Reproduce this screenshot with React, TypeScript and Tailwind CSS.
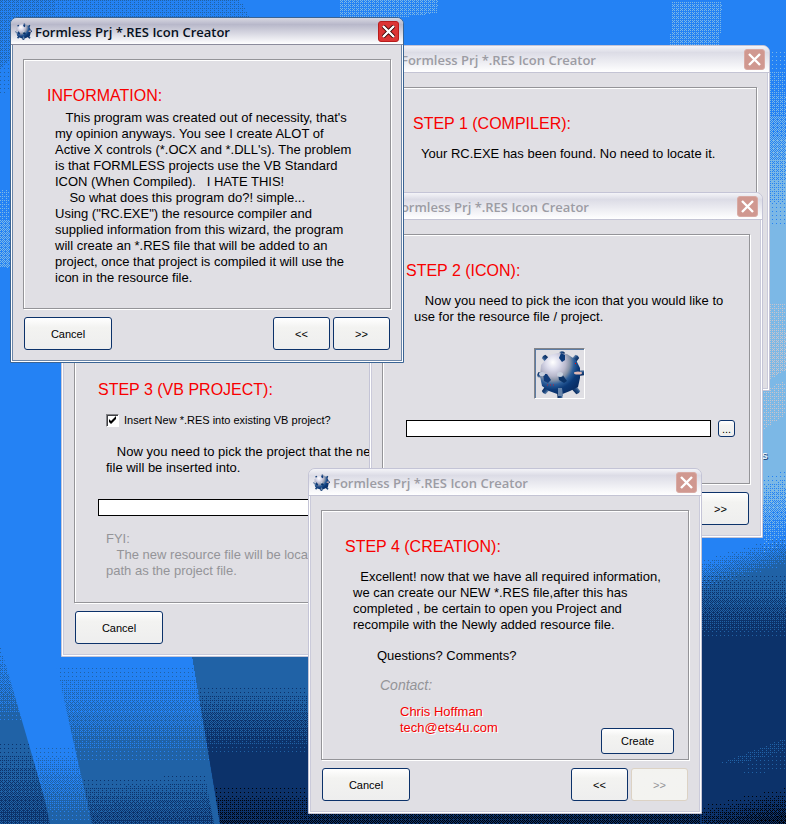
import React from "react";

const BAYER = [0, 8, 2, 10, 12, 4, 14, 6, 3, 11, 1, 9, 15, 7, 13, 5];
const LEVELS = [1, 3, 5, 7, 9, 11, 13, 15];

const INK = {
  bright: "#2482f4",
  mid: "#2062a6",
  navy: "#0c326a",
  light: "#7cb8e6",
  black: "#000208",
  sand: "#c8c4cc",
};

type Ink = keyof typeof INK;

function DitherPatterns() {
  return (
    <>
      {(Object.keys(INK) as Ink[]).map((ink) =>
        LEVELS.map((level) => (
          <pattern
            key={ink + level}
            id={`${ink}-${level}`}
            width="4"
            height="4"
            patternUnits="userSpaceOnUse"
          >
            {BAYER.map((t, i) =>
              t < level ? (
                <rect
                  key={i}
                  x={i % 4}
                  y={Math.floor(i / 4)}
                  width="1"
                  height="1"
                  fill={INK[ink]}
                />
              ) : null,
            )}
          </pattern>
        )),
      )}
    </>
  );
}

type FadeProps = {
  id: string;
  points: string;
  ink: Ink;
  y0: number;
  y1: number;
  rise?: number;
};

/* Fills a polygon with an ink that grows denser from y0 to y1; rise tilts the bands. */
function Fade({ id, points, ink, y0, y1, rise = 0 }: FadeProps) {
  const step = (y1 - y0) / LEVELS.length;
  return (
    <g clipPath={`url(#${id})`} shapeRendering="crispEdges">
      <clipPath id={id}>
        <polygon points={points} />
      </clipPath>
      {LEVELS.map((level, i) => {
        const y = y0 + step * i;
        return (
          <polygon
            key={level}
            points={`0,${y} 786,${y - rise} 786,${y - rise + step} 0,${y + step}`}
            fill={`url(#${ink}-${level})`}
          />
        );
      })}
      <polygon points={`0,${y1} 786,${y1 - rise} 786,1200 0,1200`} fill={INK[ink]} />
    </g>
  );
}

function Wallpaper() {
  return (
    <svg
      className="absolute inset-0 h-full w-full"
      viewBox="0 0 786 824"
      preserveAspectRatio="none"
      shapeRendering="crispEdges"
      aria-hidden="true"
    >
      <defs>
        <DitherPatterns />
      </defs>
      <rect width="786" height="824" fill={INK.bright} />
      <polygon points="0,0 55,0 54,17 12,18 10,60 0,70" fill="url(#mid-5)" />
      <polygon points="55,0 240,0 250,17 54,17" fill="url(#mid-3)" />
      <polygon points="0,70 10,60 10,90 0,96" fill="url(#mid-1)" />
      <polygon points="339,0 438,0 437,13 405,17 339,17" fill="url(#light-5)" />
      <polygon points="672,2 722,2 720,45 670,45" fill="url(#light-5)" />
      <polygon points="0,190 10,190 10,220 0,220" fill="url(#light-3)" />
      <polygon points="0,220 10,220 10,268 0,267" fill="url(#light-7)" />

      <Fade id="right-sky" points="763,50 786,50 786,824 763,824" ink="light" y0={50} y1={225} />
      <polygon points="769,304 786,304 786,330 769,330" fill="url(#sand-3)" />
      <polygon points="769,330 786,330 786,370 769,380" fill="url(#sand-5)" />
      <polygon points="763,390 786,380 786,415 763,430" fill="url(#sand-3)" />

      <Fade id="left-mid" points="0,645 52,824 0,824" ink="mid" y0={645} y1={722} />
      <Fade id="left-navy" points="0,645 52,824 0,824" ink="navy" y0={742} y1={850} />
      <Fade id="streak" points="0,600 57,664 92,824 50,824" ink="mid" y0={748} y1={820} />
      <Fade id="slab-mid" points="56,664 192,657 220,824 92,824" ink="mid" y0={667} y1={760} />
      <Fade id="slab-navy" points="80,770 202,760 214,824 92,824" ink="navy" y0={784} y1={850} rise={36} />
      <polygon points="191,650 320,650 320,824 220,824" fill={INK.mid} />
      <Fade id="centre-navy" points="191,650 320,650 320,824 220,824" ink="navy" y0={688} y1={752} />
      <Fade id="centre-black" points="191,650 320,650 320,824 220,824" ink="black" y0={786} y1={880} />
      <rect x="308" y="810" width="394" height="14" fill={INK.navy} />
      <rect x="308" y="813" width="394" height="11" fill="url(#black-7)" />

      <Fade id="hill-bright" points="700,400 786,400 786,824 700,824" ink="bright" y0={720} y1={795} rise={250} />
      <Fade id="hill-mid" points="700,400 786,400 786,824 700,824" ink="mid" y0={770} y1={800} rise={235} />
      <Fade id="hill-navy" points="700,400 786,400 786,824 700,824" ink="navy" y0={574} y1={638} />
      <polygon points="718,764 786,738 786,750 740,764" fill="url(#mid-3)" />
      <polygon points="748,762 786,750 786,770 742,776" fill="url(#mid-1)" />
      <Fade id="hill-black" points="702,700 786,700 786,824 702,824" ink="black" y0={948} y1={1000} rise={160} />
    </svg>
  );
}

function Mine({ size }: { size: string }) {
  const studs = [
    [9, 8, -45], [26, 4, 5], [40, 8, 40], [46, 23, 85], [4, 25, -85],
    [9, 41, -140], [24, 46, 180], [41, 41, 140],
  ];
  return (
    <svg className={`shrink-0 ${size}`} viewBox="0 0 48 48" aria-hidden="true">
      <defs>
        <radialGradient id="mine-ball" cx="0.32" cy="0.22" r="0.86">
          <stop offset="0" stopColor="#ffffff" />
          <stop offset="0.2" stopColor="#dcdcec" />
          <stop offset="0.38" stopColor="#b8b8cc" />
          <stop offset="0.5" stopColor="#8894a8" />
          <stop offset="0.62" stopColor="#2c5e9a" />
          <stop offset="0.76" stopColor="#0c3a78" />
          <stop offset="1" stopColor="#082a60" />
        </radialGradient>
        <linearGradient id="mine-stud" x1="0" x2="1">
          <stop offset="0" stopColor="#7c94b4" />
          <stop offset="0.4" stopColor="#204c84" />
          <stop offset="1" stopColor="#08285a" />
        </linearGradient>
      </defs>
      {studs.map(([x, y, turn]) => (
        <path
          key={`${x}-${y}`}
          transform={`translate(${x} ${y}) rotate(${turn})`}
          d="M-2.500-2Q0-3.500 2.500-2L3 7H-3Z"
          fill="url(#mine-stud)"
        />
      ))}
      <path
        d="M14 5L22 3L31 4L40 10L44 18L44 28L42 37L34 41L24 45L13 41L6 36L4 26L5 15Z"
        fill="url(#mine-ball)"
      />
      <path d="M25 3L29 5L29 10L26 12L23 8Z" fill="#0c3a78" />
      <path d="M7 24L11 24L15 30L12 33L8 31Z" fill="#103c7a" />
      <ellipse cx="6" cy="24" rx="3" ry="2" fill="#c4ccdc" />
      <path d="M22 24L26 24L31 31L28 33L23 30Z" fill="#0c3468" />
      <ellipse cx="24" cy="24.500" rx="3" ry="2.500" fill="#c8d0de" />
      <ellipse cx="42" cy="23" rx="4" ry="1.500" fill="#e0b8b4" />
      <path d="M22 38H26L27 46H22Z" fill="#6886ac" />
      <rect x="39" y="13" width="1" height="1" fill="#f00" />
      <path d="M11 35H20" stroke="#c02030" strokeDasharray="1 2" />
    </svg>
  );
}

type ButtonProps = {
  children: React.ReactNode;
  className: string;
  disabled?: boolean;
  label?: string;
};

function XpButton({ children, className, disabled, label }: ButtonProps) {
  return (
    <button
      type="button"
      disabled={disabled}
      aria-label={label}
      className={`flex items-center justify-center rounded-[3px] border border-[#0c326a] bg-linear-to-b from-white via-[#f3f3f1] via-30% to-[#eeeeee] text-[11px] leading-4 disabled:border-[#dcd2c4] disabled:from-[#f3f3f0] disabled:to-[#f3f3f0] disabled:text-[#949498] ${className}`}
    >
      {children}
    </button>
  );
}

type WindowProps = {
  place: string;
  heading: string;
  active?: boolean;
  last?: boolean;
  children: React.ReactNode;
};

function WizardWindow({ place, heading, active, last, children }: WindowProps) {
  const frame = active
    ? "border-[#3a6494] shadow-[inset_1px_0_#fff,inset_-1px_-1px_#fff,inset_2px_0_#6c86a8,inset_-2px_-2px_#6c86a8]"
    : "border-[#c4c4d6] shadow-[inset_1px_0_#fff,inset_-1px_-1px_#fff,inset_2px_0_#cacada,inset_-2px_-2px_#cacada]";
  const bar = active
    ? "from-[#d8d8e2] via-[#b8b8ca] to-white border-[#8c8c9c] text-[#061020]"
    : "from-[#f4f4f8] via-[#dcdce6] to-white border-[#c4c4d4] text-[#9c9ca4]";
  const close = active ? "bg-[#dc3434] border-[#b81c1c]" : "bg-[#d09890] border-[#d8aaa4]";
  return (
    <section
      className={`absolute flex w-[394px] flex-col overflow-hidden rounded-t-[7px] border bg-[#e0dfe4] ${frame} ${place}`}
    >
      <header
        className={`flex h-[27px] items-center border-b bg-linear-to-b via-25% pt-px pr-1 pl-1 ${bar}`}
      >
        <Mine size="size-[17px]" />
        <h1 className="ml-[3px] flex-1 font-['Open_Sans','Noto_Sans',sans-serif] text-[13px] leading-5 font-semibold">
          Formless Prj *.RES Icon Creator
        </h1>
        <button
          type="button"
          aria-label="Close"
          className={`flex size-[21px] items-center justify-center rounded-[3px] border ${close}`}
        >
          <svg viewBox="0 0 13 13" className="size-[13px]" aria-hidden="true">
            {active && <path d="M1 1L12 12M12 1L1 12" stroke="#300" strokeWidth="4" />}
            <path d="M1 1L12 12M12 1L1 12" stroke="#fff" strokeWidth="2.400" />
          </svg>
        </button>
      </header>
      <div className="flex flex-col gap-2 px-3 pt-[14px] pb-3">
        <div className="h-[250px] border border-[#949498] pt-[26px] pl-[23px] shadow-[inset_1px_1px_#fff,1px_1px_#fff]">
          <h2 className="text-[16px] leading-5 text-[#f80000]">{heading}</h2>
          {children}
        </div>
        <div className="flex h-[33px] gap-[3px] px-px">
          <XpButton className="mr-auto w-[88px]">Cancel</XpButton>
          <XpButton className="w-[57px]" label="Back">&lt;&lt;</XpButton>
          <XpButton className="w-[57px]" label="Next" disabled={last}>&gt;&gt;</XpButton>
        </div>
      </div>
    </section>
  );
}

function Copy({ className, children }: { className: string; children: string }) {
  return (
    <p className={`pl-2 text-[13px] leading-4 whitespace-pre ${className}`}>{children}</p>
  );
}

const INFO = `   This program was created out of necessity, that's
my opinion anyways. You see I create ALOT of
Active X controls (*.OCX and *.DLL's). The problem
is that FORMLESS projects use the VB Standard
ICON (When Compiled).   I HATE THIS!
    So what does this program do?! simple...
Using ("RC.EXE") the resource compiler and
supplied information from this wizard, the program
will create an *.RES file that will be added to an
project, once that project is compiled it will use the
icon in the resource file.`;

export default function App() {
  return (
    <main className="relative h-screen min-h-[824px] w-full overflow-hidden bg-[#2482f4] font-['Liberation_Sans',Arial,sans-serif] text-black">
      <Wallpaper />
      <span className="absolute top-[447px] left-[762px] text-[11px] leading-4 text-white [text-shadow:1px_1px_#0c326a]">
        s
      </span>

      <WizardWindow place="top-[45px] left-[376px]" heading="STEP 1 (COMPILER):">
        <Copy className="mt-3">Your RC.EXE has been found. No need to locate it.</Copy>
      </WizardWindow>

      <WizardWindow place="top-[311px] left-[61px]" heading="STEP 3 (VB PROJECT):">
        <label className="mt-3 flex items-center gap-[5px] pl-2 text-[11px] leading-4">
          <span className="relative flex size-[13px]">
            <input
              type="checkbox"
              defaultChecked
              className="size-[13px] appearance-none border border-t-[#848488] border-r-white border-b-white border-l-[#848488] bg-white shadow-[inset_1px_1px_#404044]"
            />
            <svg viewBox="0 0 13 13" className="pointer-events-none absolute inset-0" aria-hidden="true">
              <path d="M3 5L5 7L10 2V5L5 10L3 8Z" fill="#000" />
            </svg>
          </span>
          Insert New *.RES into existing VB project?
        </label>
        <Copy className="mt-4">{`   Now you need to pick the project that the new
file will be inserted into.`}</Copy>
        <input
          type="text"
          aria-label="Project file"
          className="mt-[23px] block h-[17px] w-[305px] border border-black bg-white px-1 text-[12px]"
        />
        <Copy className="mt-[15px] text-[#949498]">{`FYI:
   The new resource file will be located in the same
path as the project file.`}</Copy>
      </WizardWindow>

      <WizardWindow place="top-[192px] left-[369px]" heading="STEP 2 (ICON):">
        <Copy className="mt-3">{`   Now you need to pick the icon that you would like to
use for the resource file / project.`}</Copy>
        <div className="mt-[23px] ml-32 flex size-[51px] items-center justify-center border border-t-[#848488] border-r-white border-b-white border-l-[#848488] shadow-[inset_1px_1px_#5c7ca4]">
          <Mine size="size-[48px]" />
        </div>
        <div className="mt-[21px] flex gap-[7px]">
          <input
            type="text"
            aria-label="Icon file"
            className="h-[17px] w-[305px] border border-black bg-white px-1 text-[12px]"
          />
          <XpButton className="h-[17px] w-[17px]" label="Browse">...</XpButton>
        </div>
      </WizardWindow>

      <WizardWindow place="top-[468px] left-[308px]" heading="STEP 4 (CREATION):" last>
        <Copy className="mt-3">{`  Excellent! now that we have all required information,
we can create our NEW *.RES file,after this has
completed , be certain to open you Project and
recompile with the Newly added resource file.`}</Copy>
        <p className="mt-[15px] pl-8 text-[13px] leading-4">Questions? Comments?</p>
        <p className="mt-[13px] pl-[35px] text-[14px] leading-4 text-[#949498] italic">Contact:</p>
        <div className="mt-[11px] flex h-[50px] justify-between pr-[14px] pl-[55px]">
          <address className="text-[13px] leading-4 text-[#f80000] not-italic [text-shadow:1px_1px_#fff]">
            Chris Hoffman
            <br />
            <a href="mailto:tech@ets4u.com">tech@ets4u.com</a>
          </address>
          <XpButton className="h-[26px] w-[73px] self-end">Create</XpButton>
        </div>
      </WizardWindow>

      <WizardWindow place="top-[17px] left-[10px]" heading="INFORMATION:" active>
        <Copy className="mt-1">{INFO}</Copy>
      </WizardWindow>
    </main>
  );
}
